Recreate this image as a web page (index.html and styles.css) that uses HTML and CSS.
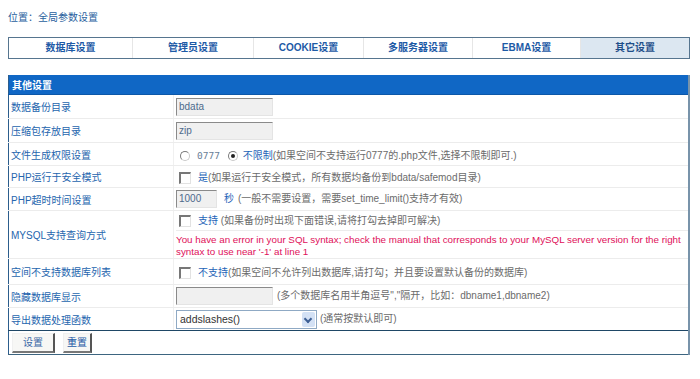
FILE: index.html
```html
<!DOCTYPE html>
<html lang="zh-CN">
   <head>
      <meta charset="UTF-8" />
      <title>全局参数设置</title>
      <link rel="stylesheet" href="styles.css">
   </head>
   <body>
      <div class="crumb">位置：全局参数设置</div>

      <!-- 设置分类 -->
      <div class="tabs">
         <div class="tab t1">数据库设置</div>
         <div class="tab t2">管理员设置</div>
         <div class="tab t3">COOKIE设置</div>
         <div class="tab t4">多服务器设置</div>
         <div class="tab t5">EBMA设置</div>
         <div class="tab t6 active">其它设置</div>
      </div>

      <!-- 其他设置表单 -->
      <table class="form">
         <tr class="head"><td colspan="2">其他设置</td></tr>
         <tr class="r24">
            <td class="label">数据备份目录</td>
            <td><span class="input w97">bdata</span></td>
         </tr>
         <tr class="r24">
            <td class="label">压缩包存放目录</td>
            <td><span class="input w97">zip</span></td>
         </tr>
         <tr class="r23">
            <td class="label">文件生成权限设置</td>
            <td>
               <span class="radio"></span><span class="grey mono">0777</span>
               <span class="radio on"></span><span class="link">不限制</span><span class="grey">(如果空间不支持运行0777的.php文件,选择不限制即可.)</span>
            </td>
         </tr>
         <tr class="r22">
            <td class="label">PHP运行于安全模式</td>
            <td><span class="check"></span><span class="link">是</span><span class="grey">(如果运行于安全模式，所有数据均备份到bdata/safemod目录)</span></td>
         </tr>
         <tr class="r23">
            <td class="label">PHP超时时间设置</td>
            <td><span class="input w40">1000</span><span class="link sec">秒</span><span class="grey">(一般不需要设置，需要set_time_limit()支持才有效)</span></td>
         </tr>
         <tr class="r47">
            <td class="label">MYSQL支持查询方式</td>
            <td class="stack">
               <div class="sub"><span class="check"></span><span class="link">支持</span><span class="grey"> (如果备份时出现下面错误,请将打勾去掉即可解决)</span></div>
               <div class="error">You have an error in your SQL syntax; check the manual that corresponds to your MySQL server version for the right<br>syntax to use near '-1' at line 1</div>
            </td>
         </tr>
         <tr class="r26">
            <td class="label">空间不支持数据库列表</td>
            <td><span class="check"></span><span class="link">不支持</span><span class="grey">(如果空间不允许列出数据库,请打勾；并且要设置默认备份的数据库)</span></td>
         </tr>
         <tr class="r23">
            <td class="label">隐藏数据库显示</td>
            <td><span class="input w97"></span><span class="grey gap">(多个数据库名用半角逗号","隔开，比如：dbname1,dbname2)</span></td>
         </tr>
         <tr class="r23 last">
            <td class="label">导出数据处理函数</td>
            <td><span class="select">addslashes()<span class="arrow"></span></span><span class="grey">(通常按默认即可)</span></td>
         </tr>
         <tr class="foot">
            <td colspan="2">
               <span class="btn b1">设置</span><span class="btn b2">重置</span>
            </td>
         </tr>
      </table>
   </body>
</html>
```

FILE: styles.css
```css
body {
margin: 0;
padding: 0 0 0 8px;
font-family: "Liberation Sans", "Noto Sans CJK SC", sans-serif;
font-size: 10px;
background: #fff;
color: #6b6b6b;
}
.crumb {
color: #2a5f9e;
padding-top: 11px;
height: 14px;
line-height: 14px;
}
.tabs {
width: 680px;
margin-top: 12px;
display: flex;
border: 1px solid #56758f;
height: 20px;
}
.tab {
text-align: center;
line-height: 20px;
font-weight: bold;
color: #1d5aa6;
border-left: 1px solid #e6e6e6;
box-sizing: border-box;
}
.t1 { width: 123px; border-left: none; }
.t2 { width: 121px; }
.t3 { width: 110px; }
.t4 { width: 109px; }
.t5 { width: 108px; }
.t6 { width: 109px; }
.tab.active {
background: #dce7f1;
color: #1f4f8a;
}
.form {
margin-top: 16px;
width: 682px;
border-collapse: collapse;
border-left: 1px solid #2c5d8c;
border-right: 2px solid #7893aa;
border-bottom: 1px solid #3d6580;
}
.form td {
padding: 0;
border-bottom: 1px solid #ececec;
vertical-align: middle;
white-space: nowrap;
}
.form .head td {
background: #1067c5;
color: #fff;
font-weight: bold;
height: 19px;
padding-left: 3px;
border-bottom: 1px solid #0c57a8;
}
.form td.label {
width: 162px;
padding-left: 2px;
color: #2565ae;
border-right: 1px solid #f0f0f0;
}
.form td + td {
padding-left: 2px;
}
.r24 td { height: 23px; }
.r23 td { height: 22px; }
.r22 td { height: 21px; }
.r26 td { height: 25px; }
.r47 td { height: 46px; }
.form .last td {
border-bottom: 1px solid #1f4766;
}
.form .foot td {
border-bottom: none;
padding-left: 3px;
height: 23px;
}
.input {
display: inline-block;
vertical-align: middle;
height: 16px;
line-height: 16px;
background: #f0f0f0;
border: 1px solid #e4e4e4;
border-top-color: #8a8a8a;
border-left-color: #8a8a8a;
color: #4d6a8c;
padding-left: 2px;
box-sizing: content-box;
}
.w97 { width: 93px; }
.w40 { width: 37px; }
.radio {
display: inline-block;
vertical-align: middle;
width: 8px;
height: 8px;
border-radius: 50%;
border: 1px solid #c9c9c9;
border-top-color: #7a7a7a;
border-left-color: #7a7a7a;
background: #fff;
margin: 0 7px 0 4px;
position: relative;
}
.radio.on::after {
content: "";
position: absolute;
left: 2px;
top: 2px;
width: 4px;
height: 4px;
border-radius: 50%;
background: #222;
}
.radio.on {
margin-left: 5px;
margin-right: 5px;
}
.check {
display: inline-block;
vertical-align: middle;
width: 9px;
height: 9px;
border: 1px solid #e2e2e2;
border-top: 2px solid #777;
border-left: 2px solid #777;
background: #fff;
margin: 0 7px 0 3px;
}
.link {
color: #1d63b8;
}
.mono {
font-family: "DejaVu Sans Mono", monospace;
font-size: 9.5px;
color: #6a7f98;
}
.sec {
margin: 0 4px 0 7px;
}
.gap {
margin-left: 4px;
}
.stack .sub {
height: 19px;
line-height: 19px;
border-bottom: 1px solid #ececec;
}
.error {
color: #e0105a;
font-size: 9.8px;
line-height: 12px;
padding: 3px 0 0;
}
.select {
display: inline-block;
vertical-align: middle;
width: 136px;
height: 17px;
line-height: 17px;
border: 1px solid #8fa9c4;
padding-left: 3px;
color: #333;
font-size: 10.5px;
position: relative;
margin-right: 3px;
}
.select .arrow {
position: absolute;
right: 1px;
top: 1px;
width: 13px;
height: 15px;
background: #d3e1f5;
border-radius: 2px;
}
.select .arrow::after {
content: "";
position: absolute;
left: 3px;
top: 4px;
width: 4px;
height: 4px;
border-right: 2px solid #3d5f94;
border-bottom: 2px solid #3d5f94;
transform: rotate(45deg);
}
.btn {
display: inline-block;
vertical-align: middle;
height: 17px;
line-height: 17px;
background: #f7f7f5;
color: #3b68a6;
border: 1px solid #f0f0f0;
border-right: 2px solid #555;
border-bottom: 2px solid #777;
}
.b1 {
padding: 0 10px;
margin-right: 8px;
}
.b2 {
padding: 0 3px;
color: #1d5aa6;
}
```
